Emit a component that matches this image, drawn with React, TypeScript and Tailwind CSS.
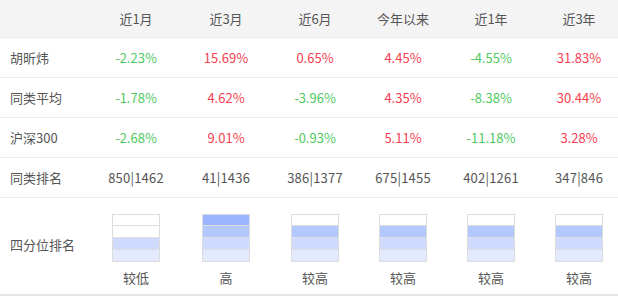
const COLS = ["近1月", "近3月", "近6月", "今年以来", "近1年", "近3年"];

const ROWS: { label: string; values: string[] }[] = [
  { label: "胡昕炜", values: ["-2.23%", "15.69%", "0.65%", "4.45%", "-4.55%", "31.83%"] },
  { label: "同类平均", values: ["-1.78%", "4.62%", "-3.96%", "4.35%", "-8.38%", "30.44%"] },
  { label: "沪深300", values: ["-2.68%", "9.01%", "-0.93%", "5.11%", "-11.18%", "3.28%"] },
];

const RANKS = ["850|1462", "41|1436", "386|1377", "675|1455", "402|1261", "347|846"];

// level: how many quartile segments are filled from the bottom
const QUARTS: { level: number; text: string }[] = [
  { level: 2, text: "较低" },
  { level: 4, text: "高" },
  { level: 3, text: "较高" },
  { level: 3, text: "较高" },
  { level: 3, text: "较高" },
  { level: 3, text: "较高" },
];

const SEG_COLOR = ["bg-[#9bb5fe]", "bg-[#b2c8fe]", "bg-[#cedbfe]", "bg-[#e3eafd]"];

function QuartBox({ level }: { level: number }) {
  return (
    <div className="w-12 h-12 border border-[#dcdcdc] flex flex-col">
      {SEG_COLOR.map((c, i) => (
        <div
          key={i}
          className={`flex-1 ${i > 0 ? "border-t border-[#dedede]" : ""} ${i >= 4 - level ? c : "bg-white"}`}
        />
      ))}
    </div>
  );
}

const grid = "grid grid-cols-[91px_90px_90px_88px_88px_88px_88px] items-center";

export default function App() {
  return (
    <div
      className="w-[618px] h-[300px] overflow-hidden bg-white text-[13px] text-[#555]"
      style={{ fontFamily: '"Noto Sans CJK SC", "Microsoft YaHei", sans-serif' }}
    >
      <div className={`${grid} h-[38px] bg-[#f4f4f5] border-b border-[#ebebf0]`}>
        <div />
        {COLS.map(c => <div key={c} className="text-center">{c}</div>)}
      </div>

      {ROWS.map(r => (
        <div key={r.label} className={`${grid} h-10 border-b border-[#ebebf0]`}>
          <div className="pl-[10px]">{r.label}</div>
          {r.values.map((v, i) => (
            <div key={i} className={`text-center ${v.startsWith("-") ? "text-[#4fca60]" : "text-[#f5404f]"}`}>{v}</div>
          ))}
        </div>
      ))}

      <div className={`${grid} h-10 border-b border-[#ebebf0]`}>
        <div className="pl-[10px]">同类排名</div>
        {RANKS.map((v, i) => <div key={i} className="text-center tracking-[0.2px]">{v}</div>)}
      </div>

      <div className={`${grid} h-[98px] border-b-2 border-[#e6e6e6]`}>
        <div className="pl-[10px] pb-[2px]">四分位排名</div>
        {QUARTS.map((q, i) => (
          <div key={i} className="flex flex-col items-center pt-[8px]">
            <QuartBox level={q.level} />
            <div className="mt-[7px] leading-[18px]">{q.text}</div>
          </div>
        ))}
      </div>
    </div>
  );
}
